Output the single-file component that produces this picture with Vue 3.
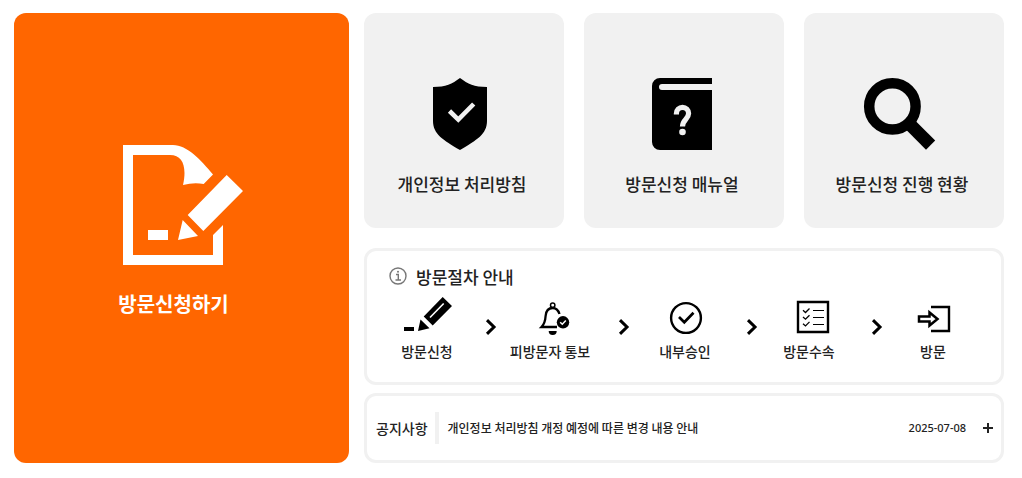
<script setup>
const cards = [
  { id: 'privacy', label: '개인정보 처리방침' },
  { id: 'manual', label: '방문신청 매뉴얼' },
  { id: 'status', label: '방문신청 진행 현황' },
]
const steps = [
  { id: 'apply', label: '방문신청' },
  { id: 'notify', label: '피방문자 통보' },
  { id: 'approve', label: '내부승인' },
  { id: 'checkin', label: '방문수속' },
  { id: 'enter', label: '방문' },
]
</script>

<template>
  <main class="page">
    <a class="apply" href="#apply">
      <svg class="apply-icon" viewBox="0 0 120 120" fill="#fff" aria-hidden="true">
        <path d="M0 0H50C64 0 78 15 90 29.5L80.7 39Q71 37 60 40C64 22 60 10 47 10H10V110H90V90L100 80V120H0Z" />
        <path d="M103.7 30L120 46L80.3 86L64.7 70ZM59.7 75L75 91L55 95ZM25 85H45V95H25Z" />
      </svg>
      <span>방문신청하기</span>
    </a>

    <div class="side">
      <nav class="cards">
        <a v-for="c in cards" :key="c.id" class="card" :href="'#' + c.id">
          <svg v-if="c.id === 'privacy'" class="card-icon" viewBox="2 0 72 72" aria-hidden="true">
            <path d="M36 0C44 6 50 9 63 9V43C63 56 53 62 36 72C19 62 9 56 9 43V9C22 9 28 6 36 0Z" />
            <path d="M25.5 33L34.3 41.6L49.7 26" fill="none" stroke="#f1f1f1" stroke-width="4.6" />
          </svg>
          <svg v-else-if="c.id === 'manual'" class="card-icon" viewBox="0 0 72 72" aria-hidden="true">
            <path d="M14 0H66V6H16a3 3 0 0 0 0 6H66V72H14a8 8 0 0 1-8-8V8a8 8 0 0 1 8-8Z" />
            <path d="M30.4 36.5V35.5a6.1 6.1 0 0 1 12.2 0C42.6 41 36.5 41.5 36.5 48.5" fill="none" stroke="#f1f1f1" stroke-width="5.2" />
            <circle cx="36.5" cy="54" r="3.3" fill="#f1f1f1" />
          </svg>
          <svg v-else class="card-icon" viewBox="2 0 72 72" aria-hidden="true">
            <circle cx="28.4" cy="28.4" r="23.2" fill="none" stroke="#000" stroke-width="10.5" />
            <path d="M45 45.5L66.6 67.1" stroke="#000" stroke-width="13" />
          </svg>
          <span>{{ c.label }}</span>
        </a>
      </nav>

      <section class="panel guide">
        <h2 class="guide-title">
          <svg class="info" viewBox="0 0 18 18" fill="none" stroke="#777" aria-hidden="true">
            <circle cx="9" cy="8" r="8" stroke-width="1.4" />
            <path d="M7 6.5H9.3V12M6.5 12H12" stroke-width="1.4" />
            <circle cx="9" cy="3.8" r="1" fill="#777" stroke="none" />
          </svg>
          방문절차 안내
        </h2>
        <div class="steps">
          <template v-for="(s, i) in steps" :key="s.id">
            <svg v-if="i" class="arrow" viewBox="0 0 16 16" aria-hidden="true">
              <path d="M4 1.2L11 8L4 14.8" fill="none" stroke="#000" stroke-width="3" />
            </svg>
            <div class="step">
              <svg class="step-icon" viewBox="0 0 48 40" fill="none" stroke="#000" aria-hidden="true">
                <g v-if="s.id === 'apply'" stroke="none" fill="#000">
                  <path d="M1 31H11V35H1ZM17.5 23.5L26.5 32.3L15 35ZM39.7 1L49 10L29.7 29.5L20.7 20.5Z" />
                  <path d="M27 21.5L40.7 7.5" stroke="#fff" stroke-width="1.6" />
                </g>
                <g v-else-if="s.id === 'notify'">
                  <circle cx="26.7" cy="9.3" r="2.2" stroke-width="1.5" />
                  <path d="M33.5 18C32 13.5 30 12 26.7 12C22 12 20 15 19.6 20C19.3 25 18.5 28 15.5 31H31" stroke-width="2.3" />
                  <path d="M22.7 35H30.7a4 4 0 0 1-8 0Z" fill="#000" stroke="none" />
                  <circle cx="37" cy="26.3" r="6.2" fill="#000" stroke="none" />
                  <path d="M34.2 26.3L36.3 28.3L39.8 24.5" stroke="#fff" stroke-width="1.5" />
                </g>
                <g v-else-if="s.id === 'approve'">
                  <circle cx="25" cy="22" r="14.9" stroke-width="2.4" />
                  <path d="M18 21L23.3 26.3L32.5 16.8" stroke-width="2.7" />
                </g>
                <g v-else-if="s.id === 'checkin'">
                  <path d="M13 6H43V36H13Z" stroke-width="2.4" />
                  <path d="M18 14.3L20.5 16.5L24.5 12.5M18 21L20.5 23.2L24.5 19.2M18 27.7L20.5 29.9L24.5 25.900" stroke-width="1.3" />
                  <path d="M28 14.5H39M28 21.5H39M28 28.5H39" stroke-width="1.2" />
                </g>
                <g v-else>
                  <path d="M22 11H40V35H22" stroke-width="2.4" />
                  <path d="M10 20.5H20.5V16.5L28.5 23L20.5 29.5V25.5H10Z" fill="#fff" stroke-width="2.5" />
                </g>
              </svg>
              <span>{{ s.label }}</span>
            </div>
          </template>
        </div>
      </section>

      <section class="panel notice">
        <h2 class="notice-title">공지사항</h2>
        <a class="notice-link" href="#notice">개인정보 처리방침 개정 예정에 따른 변경 내용 안내</a>
        <time class="date" datetime="2025-07-08">2025-07-08</time>
        <button class="more" type="button" aria-label="더보기">
          <svg viewBox="0 0 12 12" aria-hidden="true">
            <path d="M1 6H11M6 1V11" stroke="#222" stroke-width="2" />
          </svg>
        </button>
      </section>
    </div>
  </main>
</template>

<style>
body {
  background: #fff;
}
</style>

<style scoped>
.page {
  display: grid;
  grid-template-columns: minmax(0, 335fr) minmax(0, 640fr);
  gap: 15px;
  padding: 13px 18px 15px 14px;
  color: #222;
  font-family: "Noto Sans CJK KR", "Noto Sans", sans-serif;
  font-weight: 500;
}
a {
  color: inherit;
  text-decoration: none;
}
h2 {
  margin: 0;
  font-weight: 500;
}
svg {
  display: block;
  overflow: visible;
}
.apply {
  display: flex;
  flex-direction: column;
  align-items: center;
  justify-content: center;
  gap: 24px;
  padding: 0 16px 12px 0;
  border-radius: 12px;
  background: #ff6600;
  color: #fff;
  font-size: 20px;
  line-height: 30px;
  font-weight: 700;
}
.apply-icon {
  width: 120px;
  margin-left: 18px;
}
.side {
  display: flex;
  flex-direction: column;
}
.cards {
  display: grid;
  grid-template-columns: repeat(3, minmax(0, 1fr));
  gap: 20px;
  margin-bottom: 20px;
}
.card {
  display: flex;
  flex-direction: column;
  align-items: center;
  gap: 22px;
  padding: 65px 4px 32px 0;
  border-radius: 12px;
  background: #f1f1f1;
  font-size: 17px;
  line-height: 24px;
}
.card-icon {
  width: 72px;
}
.panel {
  border: 3px solid #f1f1f1;
  border-radius: 12px;
}
.guide {
  margin-bottom: 8px;
  padding: 14px 0 20px;
}
.guide-title {
  display: flex;
  align-items: center;
  gap: 9px;
  padding-left: 22px;
  font-size: 17px;
  line-height: 24px;
}
.info {
  width: 18px;
}
.steps {
  display: grid;
  grid-template-columns:
    minmax(0, 108fr) minmax(0, 20fr) minmax(0, 98fr) minmax(0, 50fr) minmax(0, 72fr)
    minmax(0, 62fr) minmax(0, 52fr) minmax(0, 84fr) minmax(0, 28fr);
  justify-items: center;
  align-items: center;
  margin-top: 7px;
  padding: 0 54px 1px 6px;
}
.step {
  display: flex;
  flex-direction: column;
  align-items: center;
  gap: 5px;
  font-size: 14px;
  line-height: 20px;
  white-space: nowrap;
}
.step-icon {
  width: 48px;
  height: 40px;
}
.arrow {
  width: 16px;
  margin-bottom: 4px;
}
.notice {
  display: flex;
  align-items: center;
  padding: 16px 7px 16px 9px;
}
.notice-title {
  padding-right: 7px;
  border-right: 4px solid #f1f1f1;
  font-size: 14px;
  line-height: 32px;
}
.notice-link {
  flex: 1;
  padding-left: 9px;
  font-size: 12px;
  line-height: 20px;
}
.date {
  font-family: "Noto Sans", sans-serif;
  font-size: 11px;
  line-height: 20px;
}
.more {
  margin-left: 16px;
  padding: 0;
  border: 0;
  background: none;
}
.more svg {
  width: 12px;
}
</style>
